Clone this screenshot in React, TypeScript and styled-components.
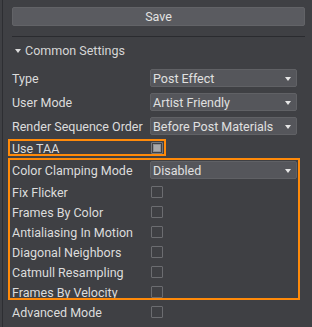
import styled, { createGlobalStyle, css } from 'styled-components';

const GlobalStyle = createGlobalStyle`
    html, body {
        margin: 0;
        background: #3f4044;
    }
    body {
        font-family: Roboto, 'Liberation Sans', sans-serif;
        color: #dcdcdc;
    }
`;

const Frame = styled.div`
    width: 312px;
    height: 327px;
    box-sizing: border-box;
    padding-left: 2px;
    overflow: hidden;
`;

const Panel = styled.div`
    height: 100%;
    box-sizing: border-box;
    border-left: 1px solid #2d2e32;
    padding: 7px 7px 0 9px;
    display: flex;
    flex-direction: column;
`;

const SaveButton = styled.button`
    height: 19px;
    width: 100%;
    margin: 0;
    padding: 0;
    border: 1px solid #626367;
    border-radius: 2px;
    background: #5a5b60;
    color: #e2e2e2;
    font-family: inherit;
    font-size: 12.5px;
    line-height: 17px;
`;

const Divider = styled.div`
    margin-top: 10px;
    height: 1px;
    background: #2a2b2f;
`;

const SectionHeader = styled.div`
    height: 26px;
    margin-bottom: 3px;
    padding-left: 3px;
    display: flex;
    align-items: center;
    gap: 4px;
    font-size: 12.5px;
    color: #d6d6d6;
`;

const Caret = styled.span`
    width: 0;
    height: 0;
    margin-top: 1px;
    border-left: 3px solid transparent;
    border-right: 3px solid transparent;
    border-top: 4px solid #dcdcdc;
`;

const Row = styled.div<{ $h: number }>`
    height: ${(p) => p.$h}px;
    display: grid;
    grid-template-columns: 138px 147px;
    align-items: center;
    font-size: 12.5px;
`;

const Label = styled.span`
    white-space: nowrap;
`;

const Select = styled.div`
    height: 18px;
    box-sizing: border-box;
    border: 1px solid #606165;
    border-radius: 2px;
    background: #55565b;
    padding: 0 5px 0 2px;
    display: flex;
    align-items: center;
    justify-content: space-between;
    color: #e0e0e0;
    white-space: nowrap;
`;

const Arrow = styled.span`
    width: 0;
    height: 0;
    margin-top: 1px;
    border-left: 3px solid transparent;
    border-right: 3px solid transparent;
    border-top: 4px solid #e6e6e6;
`;

const Box = styled.span<{ $checked?: boolean }>`
    width: 12px;
    height: 12px;
    margin-left: 1px;
    box-sizing: border-box;
    border: 1px solid #6b6c70;
    border-radius: 1px;
    display: flex;
    align-items: center;
    justify-content: center;
    ${(p) =>
        p.$checked &&
        css`
            border-color: #77787c;
            &::before {
                content: '';
                width: 8px;
                height: 8px;
                box-sizing: border-box;
                border: 1px solid #8c8d90;
                background: #a8a8aa;
            }
        `}
`;

const Highlight = styled.div<{ $top: number; $left: number; $right: number; $bottom: number }>`
    position: relative;
    &::after {
        content: '';
        position: absolute;
        top: ${(p) => p.$top}px;
        left: ${(p) => p.$left}px;
        right: ${(p) => p.$right}px;
        bottom: ${(p) => p.$bottom}px;
        border: 2px solid #ff8a0a;
        pointer-events: none;
    }
`;

function SelectRow({ label, value }: { label: string; value: string }) {
    return (
        <Row $h={24}>
            <Label>{label}</Label>
            <Select>
                <span>{value}</span>
                <Arrow />
            </Select>
        </Row>
    );
}

function CheckRow({ label, checked }: { label: string; checked?: boolean }) {
    return (
        <Row $h={20}>
            <Label>{label}</Label>
            <Box $checked={checked} />
        </Row>
    );
}

const taaOptions = [
    'Fix Flicker',
    'Frames By Color',
    'Antialiasing In Motion',
    'Diagonal Neighbors',
    'Catmull Resampling',
    'Frames By Velocity',
];

export default function App() {
    return (
        <Frame>
            <GlobalStyle />
            <Panel>
                <SaveButton>Save</SaveButton>
                <Divider />
                <SectionHeader>
                    <Caret />
                    Common Settings
                </SectionHeader>
                <SelectRow label="Type" value="Post Effect" />
                <SelectRow label="User Mode" value="Artist Friendly" />
                <SelectRow label="Render Sequence Order" value="Before Post Materials" />
                <Highlight $top={1} $left={-4} $right={139} $bottom={2}>
                    <CheckRow label="Use TAA" checked />
                </Highlight>
                <Highlight $top={0} $left={-4} $right={5} $bottom={2}>
                    <SelectRow label="Color Clamping Mode" value="Disabled" />
                    {taaOptions.map((o) => (
                        <CheckRow key={o} label={o} />
                    ))}
                </Highlight>
                <CheckRow label="Advanced Mode" />
            </Panel>
        </Frame>
    );
}
